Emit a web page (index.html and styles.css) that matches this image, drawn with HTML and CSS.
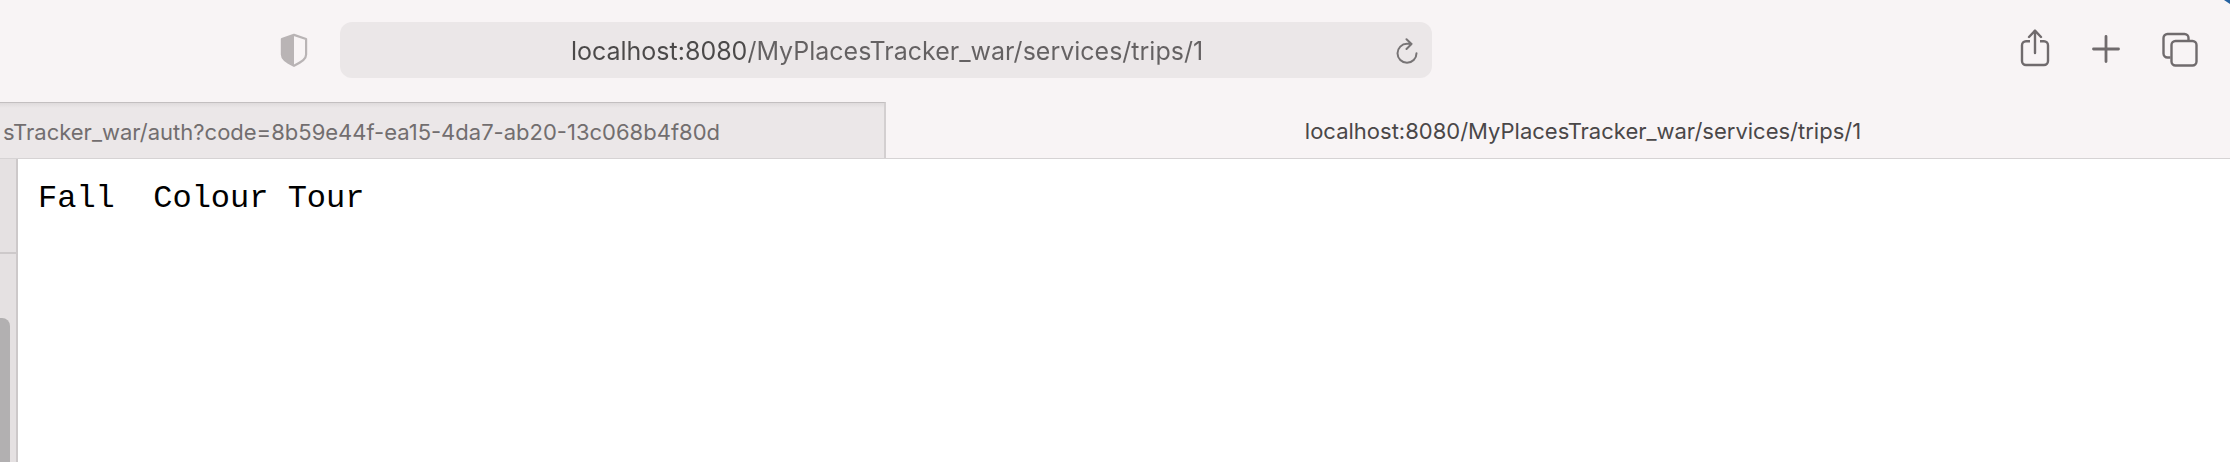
FILE: index.html
```html
<!DOCTYPE html>
<html lang="en">
<head>
<meta charset="utf-8">
<title>localhost:8080/MyPlacesTracker_war/services/trips/1</title>
<link rel="stylesheet" href="styles.css">
</head>
<body>
<div class="window">
  <span class="desktop-corner"></span>
  <header class="toolbar">
    <button class="icon-button" type="button" aria-label="Privacy report">
      <svg width="28" height="34" viewBox="0 0 28 34"><path d="M14 1.900 26.100 6v15.500c0 4.600-3.600 6.800-12.100 11.300C5.500 28.300 1.900 26.100 1.900 21.500V6Z" fill="none" stroke="#b9b4b5" stroke-width="2.200" stroke-linejoin="round"/><path d="M14 1.900v30.900C5.500 28.300 1.900 26.100 1.900 21.500V6Z" fill="#b9b4b5"/></svg>
    </button>
    <div class="address">
      <input class="address-input" type="text" aria-label="Address" spellcheck="false" value="localhost:8080/MyPlacesTracker_war/services/trips/1">
      <button class="icon-button" type="button" aria-label="Reload">
        <svg width="22" height="26" viewBox="0 0 22 26" fill="none" stroke="#777475" stroke-width="2" stroke-linecap="round" stroke-linejoin="round"><path d="M20.500 15.300A9.500 9.500 0 1 1 11 5.800h4.500M10.500 1.200l5 4.800-5 5"/></svg>
      </button>
    </div>
    <div class="actions">
      <button class="icon-button" type="button" aria-label="Share">
        <svg width="30" height="38" viewBox="0 0 30 38" fill="none" stroke="#706b6d" stroke-width="2.400" stroke-linecap="round" stroke-linejoin="round"><path stroke-linecap="butt" d="M10 12.200H6a4 4 0 0 0-4 4V32a4 4 0 0 0 4 4h18a4 4 0 0 0 4-4V16.200a4 4 0 0 0-4-4h-4"/><path d="M15 24V1.700M9 8l6-6.300L21 8"/></svg>
      </button>
      <button class="icon-button" type="button" aria-label="New tab">
        <svg width="28" height="38" viewBox="0 0 28 38" fill="none" stroke="#706b6d" stroke-width="2.800" stroke-linecap="round"><path d="M14 7.500v25M1.500 20h25"/></svg>
      </button>
      <button class="icon-button" type="button" aria-label="Tab overview">
        <svg width="36" height="38" viewBox="0 0 36 38" fill="none" stroke="#706b6d" stroke-width="2.400" stroke-linejoin="round"><rect x="9.500" y="12" width="25" height="24.500" rx="4"/><path d="M8.500 28.500H5.500a4 4 0 0 1-4-4V9a4 4 0 0 1 4-4h17a4 4 0 0 1 4 4v2"/></svg>
      </button>
    </div>
  </header>
  <nav class="tabs" aria-label="Tabs">
    <button class="tab tab-background" type="button">sTracker_war/auth?code=8b59e44f-ea15-4da7-ab20-13c068b4f80d</button>
    <button class="tab tab-current" type="button">localhost:8080/MyPlacesTracker_war/services/trips/1</button>
  </nav>
  <div class="content">
    <aside class="sidebar">
      <div class="sidebar-head"></div>
      <div class="scroll-track"><div class="scroll-thumb"></div></div>
    </aside>
    <main class="page"><pre class="page-text">Fall  Colour Tour</pre></main>
  </div>
</div>
</body>
</html>
```
FILE: styles.css
```css
* {
  box-sizing: border-box;
}

body {
  margin: 0;
  font-family: Inter, "Liberation Sans", sans-serif;
  background: #fff;
}

button {
  padding: 0;
  border: 0;
  background: none;
  font: inherit;
}

svg {
  display: block;
}

.window {
  position: relative;
  display: flex;
  flex-direction: column;
  min-height: 100vh;
  overflow: hidden;
}

.desktop-corner {
  position: absolute;
  top: 0;
  right: 0;
  width: 6px;
  height: 4px;
  background: #2562a0;
  clip-path: polygon(0 0, 100% 0, 100% 100%);
}

.toolbar {
  display: flex;
  align-items: center;
  height: 102px;
  padding: 0 32px 2px 280px;
  background: #f8f4f5;
}

.address {
  display: flex;
  align-items: center;
  flex: 0 1 1092px;
  height: 56px;
  margin: 0 auto 0 32px;
  padding: 2px 14px 0 38px;
  border-radius: 12px;
  background: #ebe7e8;
}

.address-input {
  flex: 1;
  min-width: 0;
  padding: 0;
  border: 0;
  outline: 0;
  font: 25px/40px Inter, "Liberation Sans", sans-serif;
  text-align: center;
  color: transparent;
  background: linear-gradient(90deg, #4b4949 36.5%, #646162 36.5%);
  background-clip: text;
  -webkit-background-clip: text;
}

.actions {
  display: flex;
  align-items: center;
  gap: 42px;
  padding-bottom: 4px;
}

.tabs {
  display: flex;
  height: 57px;
  border-bottom: 1px solid #d6d3d4;
  background: #f8f4f5;
  font-size: 22px;
  line-height: 28px;
}

.tab {
  padding-top: 2px;
  white-space: nowrap;
  overflow: hidden;
}

.tab-background {
  flex: 0 0 886px;
  padding-right: 164px;
  border-top: 1px solid #c3bfc0;
  border-right: 2px solid #d3cfd0;
  background: linear-gradient(#dfdbdc, #ebe7e8 5px);
  color: #726e6f;
  text-align: right;
}

.tab-current {
  flex: 1;
  padding-left: 50px;
  color: #4a4748;
}

.content {
  display: flex;
  flex: 1;
}

.sidebar {
  display: flex;
  flex-direction: column;
  width: 18px;
  border-right: 2px solid #cdc9ca;
  background: #e5e1e2;
}

.sidebar-head {
  height: 95px;
  border-bottom: 2px solid #cdc9ca;
}

.scroll-track {
  display: flex;
  flex: 1;
  padding: 64px 6px 0 0;
}

.scroll-thumb {
  flex: 1;
  border-top-right-radius: 8px;
  background: #b2b0b1;
}

.page {
  flex: 1;
  padding: 20px;
}

.page-text {
  margin: 0;
  font: 32px/40px "Courier New", Courier, "Liberation Mono", monospace;
  color: #000;
}
```
